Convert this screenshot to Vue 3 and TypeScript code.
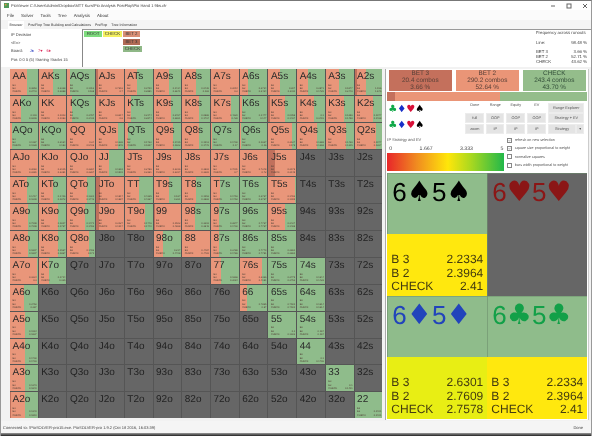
<script setup lang="ts">
interface Cell {
  label: string
  active: boolean
  bg: string
  v2: string
  v3: string
}

const DARK = '#c0705c'
const SALMON = '#e9967a'
const GREEN = '#8fbc8b'

const source: string[] = [
  'AA .62 0 .3853 .2743,AKs .5 0 .3328 .2888,AQs .12 0 .1013 .168,AJs 1 .07 .7616 .7,ATs .42 0 .3799 .2881,A9s .57 0 .1434 .2841,A8s .5 0 .0435 .182,A7s 1 0 .2054 .2,A6s .3 0 .3724 .3434,A5s .43 0 .307 .3011,A4s .4 0 .2871 .1725,A3s .45 0 .1877 .2446,A2s .42 .07 1.156 1.846',
  'AKo .4 0 .193 .6296,KK 1 0 .1003 .1983,KQs .18 0 .2457 .2439,KJs 1 0 .6317 .6,KTs .2 0 .2174 .2874,K9s .63 0 .2457 .2861,K8s .6 0 .0886 .1794,K7s .7 0 .4329 .428,K6s .08 0 .1477 .147,K5s .61 .06 .0958 .1467,K4s .6 0 .1 .3415,K3s .65 0 .1256 .1458,K2s .65 0 .1077 .1468',
  'AQo .06 0 .1187 .1928,KQo .05 0 .2164 .183,QQ 1 0 .24 .5726,QJs .8 0 .1236 .1845,QTs .12 0 .1732 .1897,Q9s .7 0 .1495 .1602,Q8s .62 0 .1913 .1776,Q7s .05 0 .1702 .17,Q6s .05 0 .1637 .16,Q5s .85 0 .2127 .178,Q4s .72 0 .1288 .1368,Q3s .72 0 .1426 .1305,Q2s .76 0 .1077 .1367',
  'AJo 1 .05 .2082 .2281,KJo 1 0 .2105 .2281,QJo 1 0 .2284 .2267,JJ .48 0 .1661 .1501,JTs 1 0 .2786 .2361,J9s 1 0 .2316 .2397,J8s 1 0 .3861 .3281,J7s 1 0 .7001 .7,J6s 1 0 .7248 .72,J5s 1 .25 .2178 .2145,J4s,J3s,J2s',
  'ATo .62 0 .1417 .1698,KTo .5 0 .1416 .1872,QTo .7 0 .1321 .1742,JTo 1 .15 .1817 .1887,TT .5 0 .4225 .4267,T9s .55 0 .187 .261,T8s .5 0 .1953 .2882,T7s .32 0 .1753 .1752,T6s 0 0 .2767 .2767,T5s .95 0 .1783 .1905,T4s,T3s,T2s',
  'A9o .66 0 .7908 .7908,K9o .72 0 .1817 .1767,Q9o .65 0 .1471 .1782,J9o 1 .1 .2127 .1917,T9o .7 0 .1746 .1749,99 1 .04 .1502 .4868,98s .45 0 .3292 .3848,97s .3 0 .2877 .1792,96s 0 0 .7767 .7767,95s .6 0 .2427 .1488,94s,93s,92s',
  'A8o .66 0 .1897 .1897,K8o .72 0 .1567 .1867,Q8o .8 0 .1786 .171,J8o,T8o,98o .35 0 .217 .4708,88 1 0 .4487 .4781,87s .3 0 .2488 .1786,86s 0 0 .7779 .7781,85s 0 0 .2861 .2861,84s,83s,82s',
  'A7o .95 0 .3234 .3,K7o .36 0 .1714 .325,Q7o,J7o,T7o,97o,87o,77 .35 0 .1866 .2084,76s .8 0 .3366 .4181,75s 0 0 .2775 .2752,74s 0 0 .1644 .1428,73s,72s',
  'A6o .5 0 .2752 .287,K6o,Q6o,J6o,T6o,96o,86o,76o,66 .25 0 .7865 .87,65s 0 0 .7501 .7501,64s 0 0 .1614 .1614,63s,62s',
  'A5o .52 0 .1964 .1837,K5o,Q5o,J5o,T5o,95o,85o,75o,65o,55 0 0 .1 .1692,54s 0 0 .167 .167,53s,52s',
  'A4o .55 0 .1702 .1793,K4o,Q4o,J4o,T4o,94o,84o,74o,64o,54o,44 0 0 .1 .1706,43s,42s',
  'A3o .55 0 .1273 .1849,K3o,Q3o,J3o,T3o,93o,83o,73o,63o,53o,43o,33 0 0 .1 .1401,32s',
  'A2o .55 .05 .1349 .1819,K2o,Q2o,J2o,T2o,92o,82o,72o,62o,52o,42o,32o,22 0 0 .1401 .1401'
]

const fmt = (v: string): string => `${v.startsWith('.') ? '0' : ''}${v}`

const cells: Cell[] = source.flatMap((row) =>
  row.split(',').map((entry) => {
    const [label, share, dark, v2, v3] = entry.split(' ')
    if (share === undefined) {
      return { label, active: false, bg: '', v2: '', v3: '' }
    }
    const d = Number(dark) * 100
    const s = Number(share) * 100
    return {
      label,
      active: true,
      bg: `linear-gradient(90deg, ${DARK} ${d}%, ${SALMON} ${d}% ${s}%, ${GREEN} ${s}%)`,
      v2: fmt(v2),
      v3: fmt(v3)
    }
  })
)

const menu = ['File', 'Solver', 'Tools', 'Tree', 'Analysis', 'About']
const tabs = ['PostFlop Tree Building and Calculations', 'PreFlop', 'Tree Information']
const actions = [
  { name: 'BET 3', combos: '20.4 combos', pct: '3.66 %', kind: 'a-dark' },
  { name: 'BET 2', combos: '290.2 combos', pct: '52.64 %', kind: 'a-salmon' },
  { name: 'CHECK', combos: '243.4 combos', pct: '43.70 %', kind: 'a-green' }
]
const suits = [
  { g: '♣', c: 's-green' },
  { g: '♦', c: 's-blue' },
  { g: '♥', c: 's-red' },
  { g: '♠', c: 's-black' }
]
const options = [
  { t: 'refresh on new selection', on: true },
  { t: 'square size proportional to weight', on: true },
  { t: 'normalize squares', on: false },
  { t: 'bars width proportional to weight', on: false }
]
const tiles = [
  { r: 1, s: '♠', c: 'c-black', y: 'y-warm', vals: ['2.2334', '2.3964', '2.41'] },
  { r: 2, s: '♥', c: 'c-red', y: '', vals: [] as string[] },
  { r: 3, s: '♦', c: 'c-blue', y: 'y-lime', vals: ['2.6301', '2.7609', '2.7578'] },
  { r: 4, s: '♣', c: 'c-green', y: 'y-warm', vals: ['2.2334', '2.3964', '2.41'] }
]
const names = ['B 3', 'B 2', 'CHECK']
</script>

<template>
  <div class="win">
    <div class="title">
      <div class="title-left">
        <svg class="app" viewBox="0 0 6 6"><rect width="6" height="6" fill="#4f9a5b" /><rect x="1" y="1" width="2" height="2" fill="#d94" /></svg>
        <span>PioViewer C:\Users\Admin\Dropbox\MTT Kurs\Pio Analysis PostFlop\Pio Hand 1 9bs.cfr</span>
      </div>
      <div class="wc">
        <svg viewBox="0 0 6 6"><path d="M1 3h4" stroke="#666" fill="none" /></svg>
        <svg viewBox="0 0 6 6"><rect x="1" y="1" width="4" height="4" stroke="#666" fill="none" /></svg>
        <svg viewBox="0 0 6 6"><path d="M1 1l4 4M5 1L1 5" stroke="#666" fill="none" /></svg>
      </div>
    </div>
    <div class="menu">
      <span v-for="m in menu" :key="m">{{ m }}</span>
    </div>
    <div class="tabs">
      <span class="tab on">Browser</span>
      <span v-for="t in tabs" :key="t" class="tab">{{ t }}</span>
    </div>
    <div class="head">
      <div class="info">
        <div>IP Decision</div>
        <div>&lt;Ev&gt;</div>
        <div class="board">
          <span>Board:</span>
          <span class="b-blue">J♠</span>
          <span class="b-red">7♥</span>
          <span class="b-red">6♦</span>
        </div>
        <div>Pot: 0 0 5 (5) Starting Stacks 15</div>
      </div>
      <div class="tree">
        <div class="tree-col"><span class="node root">ROOT</span></div>
        <div class="tree-col"><span class="node chk">CHECK</span></div>
        <div class="tree-col">
          <span class="node bet2">BET 2</span>
          <span class="node bet3">BET 3</span>
          <span class="node check">CHECK</span>
        </div>
      </div>
      <div class="freq">
        <div class="f-head">Frequency across runouts</div>
        <div class="f-row f-line"><span>Line:</span><span>98.48 %</span></div>
        <div class="f-row"><span>BET 3</span><span>3.66 %</span></div>
        <div class="f-row"><span>BET 2</span><span>52.71 %</span></div>
        <div class="f-row"><span>CHECK</span><span>43.62 %</span></div>
      </div>
    </div>
    <div class="main">
      <div class="grid">
        <div
          v-for="c in cells"
          :key="c.label"
          class="cell"
          :class="{ off: !c.active }"
          :style="c.active ? { background: c.bg } : undefined"
        >
          <div class="lab">{{ c.label }}</div>
          <div v-if="c.active" class="mini">
            <div class="m-row"><span>B3</span><span></span></div>
            <div class="m-row"><span>B2</span><span>{{ c.v2 }}</span></div>
            <div class="m-row"><span>CHECK</span><span>{{ c.v3 }}</span></div>
          </div>
        </div>
      </div>
      <div class="side">
        <div class="actions">
          <div v-for="a in actions" :key="a.name" class="action" :class="a.kind">
            <div>{{ a.name }}</div>
            <div>{{ a.combos }}</div>
            <div>{{ a.pct }}</div>
          </div>
        </div>
        <div class="bar">
          <div class="bar-d"></div>
          <div class="bar-s"></div>
          <div class="bar-g"></div>
        </div>
        <div class="controls">
          <div class="suits">
            <div v-for="n in 2" :key="n" class="suit-row">
              <span v-for="s in suits" :key="s.g" :class="s.c">{{ s.g }}</span>
            </div>
          </div>
          <div class="btns">
            <span class="cap">Done</span>
            <span class="cap">Range</span>
            <span class="cap">Equity</span>
            <span class="cap">EV</span>
            <span class="btn">Range Explorer</span>
            <span class="btn">full</span>
            <span class="btn">OOP</span>
            <span class="btn">OOP</span>
            <span class="btn">OOP</span>
            <span class="btn">Strategy + EV</span>
            <span class="btn">zoom</span>
            <span class="btn">IP</span>
            <span class="btn">IP</span>
            <span class="btn">IP</span>
            <span class="split">
              <span class="btn grow">Strategy</span>
              <span class="btn tiny">▾</span>
            </span>
          </div>
        </div>
        <div class="strat">
          <div class="scale">
            <div class="s-title">IP Strategy and EV</div>
            <div class="s-nums"><span>0</span><span>1.667</span><span>3.333</span><span>5</span></div>
            <div class="s-grad"></div>
          </div>
          <div class="opts">
            <div v-for="o in options" :key="o.t" class="opt">
              <span class="box">
                <svg v-if="o.on" viewBox="0 0 6 6"><path d="M1 3l1.5 1.5L5 1.5" stroke="#444" stroke-width=".8" fill="none" /></svg>
              </span>
              <span>{{ o.t }}</span>
            </div>
          </div>
        </div>
        <div class="tiles">
          <div v-for="t in tiles" :key="t.r" class="tile" :class="{ gray: !t.y }">
            <div class="hand" :class="t.c">6<span class="pip">{{ t.s }}</span>5<span class="pip">{{ t.s }}</span></div>
            <div v-if="t.y" class="evs" :class="t.y">
              <div v-for="(v, i) in t.vals" :key="i" class="ev"><span>{{ names[i] }}</span><span>{{ v }}</span></div>
            </div>
          </div>
        </div>
      </div>
    </div>
    <div class="status">
      <span>Connected to: \PioSOLVER-pro15.exe. PioSOLVER-pro 1.9.2 (Oct 18 2016, 16:03:39)</span>
      <span>Done</span>
    </div>
    <div class="floor"></div>
  </div>
</template>

<style scoped>
.win {
  width: 592px;
  height: 436px;
  display: flex;
  flex-direction: column;
  overflow: hidden;
  background: #f0f0f0;
  color: #333;
  font-family: "Liberation Sans", Arial, sans-serif;
  text-rendering: geometricPrecision;
  filter: blur(0.4px);
  box-sizing: border-box;
  border-top: 1px solid #777;
  border-left: 1px solid #999;
  border-right: 1px solid #999;
}
.title {
  height: 9px;
  flex: none;
  background: #fff;
  display: flex;
  align-items: center;
  justify-content: space-between;
  padding: 0 3px;
  font-size: 4px;
  color: #444;
}
.title-left { display: flex; align-items: center; gap: 2px; }
.app { width: 5px; height: 5px; }
.wc { display: flex; gap: 10px; }
.wc svg { width: 6px; height: 6px; }
.menu {
  height: 10px;
  flex: none;
  background: #fbfbfb;
  display: flex;
  align-items: center;
  gap: 7px;
  padding-left: 6px;
  font-size: 4.4px;
}
.tabs {
  height: 9px;
  flex: none;
  display: flex;
  align-items: center;
  gap: 4px;
  padding-left: 7px;
  font-size: 3.55px;
  background: #f4f4f4;
}
.tab { line-height: 8px; }
.tab.on { background: #fff; padding: 0 1.5px; }
.head {
  height: 38px;
  flex: none;
  display: flex;
  background: #fff;
  font-size: 4px;
}
.info {
  width: 81px;
  padding: 3px 0 0 10px;
  box-sizing: border-box;
  display: flex;
  flex-direction: column;
  gap: 3.2px;
  flex: none;
  line-height: 5px;
  color: #444;
}
.board { display: flex; gap: 4px; }
.board span:first-child { margin-right: 3px; }
.b-blue { color: #2a3fc0; }
.b-red { color: #d8184c; }
.tree {
  flex: 1;
  display: flex;
  align-items: flex-start;
  gap: 1px;
  padding: 1px 0 0 1px;
  border-left: 1px solid #888;
  border-top: 1px solid #999;
}
.tree-col { display: flex; flex-direction: column; gap: 1.5px; }
.node {
  display: block;
  height: 6px;
  line-height: 6px;
  font-size: 4.4px;
  text-align: center;
  box-sizing: border-box;
}
.root { background: #7fdc7f; width: 18px; }
.chk { background: #f4f060; width: 19px; }
.bet2 { background: #d88f75; width: 17px; }
.bet3 { background: #b06a55; width: 17px; }
.check { background: #8fb887; width: 19px; }
.freq {
  width: 55px;
  flex: none;
  padding: 0 3px 0 0;
  border-top: 1px solid #999;
  line-height: 5px;
  color: #444;
  box-sizing: border-box;
  font-size: 4.3px;
}
.f-head { white-space: nowrap; }
.f-row { display: flex; justify-content: space-between; padding-right: 1px; }
.f-line { margin: 5px 0 4px; }
.main {
  display: flex;
  height: 354px;
  flex: none;
  padding: 2px 3px 0 9px;
  background: #f2f2f2;
  box-sizing: border-box;
}
.grid {
  width: 372.3px;
  height: 349.4px;
  flex: none;
  display: grid;
  grid-template-columns: repeat(13, 1fr);
  grid-template-rows: repeat(13, 1fr);
  gap: 1px;
  background: #555;
  box-sizing: border-box;
}
.cell {
  min-width: 0;
  min-height: 0;
  display: flex;
  flex-direction: column;
  padding: 2px 1px 1.5px 2.5px;
  overflow: hidden;
  color: #2a2a2a;
}
.cell.off { background: #666; color: #222; }
.lab { font-size: 10px; line-height: 11px; }
.mini {
  margin-top: auto;
  font-size: 2.5px;
  line-height: 3.2px;
  color: #55443a;
}
.m-row { display: flex; justify-content: space-between; }
.side {
  flex: 1;
  margin-left: 3px;
  background: #fff;
  border-left: 1px solid #aaa;
  border-right: 1px solid #ccc;
  display: flex;
  flex-direction: column;
  padding: 1px 1px 0 1px;
  height: 351px;
  box-sizing: border-box;
}
.actions {
  display: flex;
  gap: 4px;
  padding: 0 1.5px;
}
.action {
  flex: 1;
  height: 20.5px;
  font-size: 6.4px;
  line-height: 7px;
  text-align: center;
  color: #5a4038;
}
.a-dark { background: #c4705c; }
.a-salmon { background: #ea9577; }
.a-green { background: #94bd8b; color: #34503a; }
.bar { display: flex; height: 9px; margin-top: 1.5px; flex: none; }
.bar-d { width: 3.66%; background: #c4705c; }
.bar-s { width: 52.64%; background: #ea9577; }
.bar-g { flex: 1; background: #94bd8b; }
.controls { display: flex; height: 34px; margin-top: 1.5px; flex: none; }
.suits {
  width: 78px;
  flex: none;
  display: flex;
  flex-direction: column;
  gap: 6px;
  padding: 2px 0 0 1px;
  box-sizing: border-box;
}
.suit-row { display: flex; width: 36px; justify-content: space-between; font-size: 10px; line-height: 10px; font-family: "DejaVu Sans", sans-serif; }
.s-green { color: #10a848; }
.s-blue { color: #1830c8; }
.s-red { color: #d81038; }
.s-black { color: #000; }
.btns {
  display: grid;
  grid-template-columns: 19px 18px 19px 19px 36px;
  grid-template-rows: 10px 10px 10px;
  column-gap: 2px;
  row-gap: 0.5px;
  font-size: 3.8px;
  color: #555;
}
.cap { display: flex; align-items: center; justify-content: center; padding-bottom: 6px; height: 10px; box-sizing: border-box; }
.btn {
  display: flex;
  align-items: center;
  justify-content: center;
  background: #e4e4e4;
  border: 1px solid #ececec;
  box-sizing: border-box;
}
.split { display: flex; gap: 0.5px; }
.grow { flex: 1; }
.tiny { width: 8px; }
.strat { display: flex; height: 36.5px; flex: none; }
.scale { width: 117px; flex: none; display: flex; flex-direction: column; }
.s-title { font-size: 4px; line-height: 6px; color: #555; }
.s-nums {
  display: flex;
  justify-content: space-between;
  font-size: 5.2px;
  line-height: 6px;
  margin-top: 3px;
  padding: 0 1px 0 2px;
  color: #444;
}
.s-grad {
  height: 18px;
  margin-top: 1px;
  flex: none;
  background: linear-gradient(90deg, #e8262a 0%, #f08a20 25%, #ffe60a 52%, #a8d820 72%, #22b84a 100%);
}
.opts {
  flex: 1;
  padding: 1px 0 0 3px;
  display: flex;
  flex-direction: column;
  gap: 3px;
  font-size: 3.7px;
  color: #555;
}
.opt { display: flex; align-items: center; gap: 2.5px; height: 5.3px; white-space: nowrap; }
.box {
  width: 5px;
  height: 5px;
  border: 0.6px solid #888;
  background: #fff;
  box-sizing: border-box;
  flex: none;
  display: flex;
}
.box svg { width: 100%; height: 100%; }
.tiles {
  display: grid;
  grid-template-columns: 100px 100px;
  grid-template-rows: 123px 123px;
  flex: none;
}
.tile {
  background: #8fbc8b;
  display: flex;
  flex-direction: column;
  box-shadow: inset 0.6px 0.6px 0 #6f8f6f;
}
.tile.gray { background: #666; }
.hand {
  height: 61px;
  font-size: 26px;
  line-height: 30px;
  padding: 4px 0 0 5px;
  box-sizing: border-box;
  flex: none;
  white-space: nowrap;
}
.pip {
  font-family: "DejaVu Sans", sans-serif;
  font-size: 28px;
  line-height: 30px;
}
.c-black { color: #000; }
.c-red { color: #8b1616; }
.c-blue { color: #2244bb; }
.c-green { color: #12a048; }
.evs {
  flex: 1;
  display: flex;
  flex-direction: column;
  justify-content: flex-end;
  padding: 0 4px 2px;
  font-size: 12px;
  line-height: 13.7px;
  color: #443c10;
}
.y-warm { background: #ffe80e; }
.y-lime { background: #e8ee14; }
.ev { display: flex; justify-content: space-between; }
.status {
  height: 12px;
  flex: none;
  display: flex;
  justify-content: space-between;
  align-items: center;
  padding: 0 8px 0 2px;
  font-size: 4px;
  background: #f5f5f5;
  color: #444;
}
.floor { flex: 1; background: linear-gradient(#999, #222); }
</style>
